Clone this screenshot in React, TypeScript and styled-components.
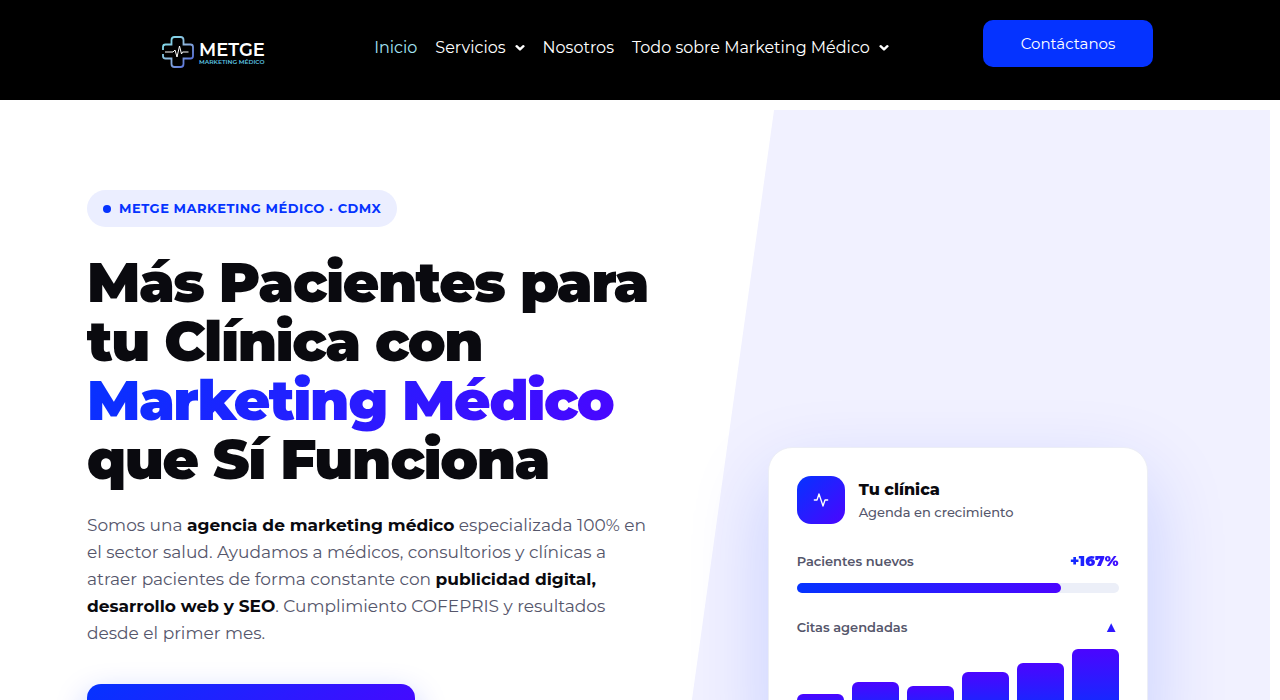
import React from "react";
import styled, { createGlobalStyle } from "styled-components";

const gradient = "linear-gradient(135deg, #0533ff, #4b05ff)";

const GlobalStyle = createGlobalStyle`
  * { box-sizing: border-box; }
  body {
    margin: 0;
    background: #fff;
    color: #0a0a0f;
    font-family: Montserrat, "Open Sans", sans-serif;
  }
  h1, p { margin: 0; }
  a { color: inherit; text-decoration: none; }
`;

const Header = styled.header`
  display: flex;
  justify-content: space-between;
  align-items: flex-start;
  height: 100px;
  padding: 20px 127px 0 160px;
  background: #000;
`;

const Logo = styled.a`
  display: flex;
  align-items: center;
  gap: 4px;
  width: 120px;
  height: 64px;
  color: #fff;
`;

const LogoText = styled.span`
  display: flex;
  flex-direction: column;
  padding-top: 4px;
  font-size: 18px;
  line-height: 16px;
  font-weight: 600;
`;

const LogoSub = styled.small`
  color: #5cc4e4;
  font-size: 6px;
  line-height: 8px;
  font-weight: 600;
`;

const Nav = styled.nav`
  display: flex;
  gap: 18px;
  padding-top: 16px;
`;

const NavLink = styled.a<{ $active?: boolean }>`
  display: flex;
  align-items: center;
  gap: 9px;
  color: ${(p) => (p.$active ? "#a3e4f5" : "#fff")};
  font-size: 16px;
  line-height: 24px;
  white-space: nowrap;
`;

const Contact = styled.a`
  width: 170px;
  border-radius: 10px;
  background: #0533ff;
  color: #fff;
  font-size: 15px;
  line-height: 47px;
  text-align: center;
`;

const Hero = styled.section`
  position: relative;
  margin: 10px;
  padding: 80px 77px 144px;
`;

const Wedge = styled.div`
  position: absolute;
  inset: 0 0 0 52%;
  background: #f1f1ff;
  clip-path: polygon(18% 0, 100% 0, 100% 100%, 0 100%);
`;

const HeroGrid = styled.div`
  position: relative;
  display: grid;
  grid-template-columns: 11fr 9fr;
  gap: 60px;
  max-width: 1180px;
  margin: 0 auto;
`;

const Copy = styled.div`
  display: flex;
  flex-direction: column;
  align-items: flex-start;
`;

const Badge = styled.span`
  display: flex;
  align-items: center;
  gap: 8px;
  padding: 0 16px;
  border-radius: 20px;
  background: #ebeeff;
  color: #0533ff;
  font-size: 13px;
  line-height: 37px;
  font-weight: 700;
  letter-spacing: 0.04em;
  white-space: nowrap;
  &::before {
    content: "";
    width: 8px;
    height: 8px;
    border-radius: 50%;
    background: #0533ff;
  }
`;

const Title = styled.h1`
  margin-top: 26px;
  font-size: 56px;
  line-height: 59px;
  font-weight: 900;
  letter-spacing: -0.026em;
  white-space: nowrap;
`;

const GradientText = styled.span`
  background: ${gradient};
  background-clip: text;
  -webkit-background-clip: text;
  color: transparent;
`;

const Highlight = styled(GradientText)`
  padding-right: 4px;
`;

const Lead = styled.p`
  max-width: 560px;
  margin-top: 23px;
  color: #55566b;
  font-size: 17px;
  line-height: 27px;
  strong { color: #0a0a0f; font-weight: 700; }
`;

const Cta = styled.a`
  width: 328px;
  height: 60px;
  margin-top: 37px;
  border-radius: 14px;
  background: ${gradient};
  box-shadow: 0 12px 32px rgba(5, 51, 255, 0.28);
`;

const Card = styled.aside`
  align-self: start;
  justify-self: center;
  width: 100%;
  max-width: 380px;
  margin-top: 257px;
  padding: 28px;
  border: 1px solid #eceef6;
  border-radius: 24px;
  background: #fff;
  box-shadow: 0 30px 80px rgba(5, 51, 255, 0.18);
`;

const CardHead = styled.div`
  display: flex;
  align-items: center;
  gap: 14px;
  padding-bottom: 3px;
`;

const IconTile = styled.span`
  display: grid;
  place-items: center;
  width: 48px;
  height: 48px;
  border-radius: 14px;
  background: ${gradient};
`;

const CardTitle = styled.strong`
  display: block;
  font-size: 16px;
  line-height: 24px;
  font-weight: 800;
`;

const Label = styled.span<{ $strong?: boolean }>`
  display: block;
  color: #55566b;
  font-size: 13px;
  line-height: 20px;
  font-weight: ${(p) => (p.$strong ? 600 : 500)};
`;

const Metric = styled.div`
  display: flex;
  justify-content: space-between;
  align-items: center;
  margin-top: 23px;
`;

const Value = styled(GradientText)`
  font-size: 15px;
  line-height: 22px;
  font-weight: 900;
`;

const Trend = styled(Value)`
  font-family: "Liberation Sans", sans-serif;
`;

const Track = styled.div`
  height: 10px;
  margin-top: 11px;
  border-radius: 5px;
  background: #eceff8;
`;

const Fill = styled.div`
  width: 82%;
  height: 100%;
  border-radius: 5px;
  background: linear-gradient(90deg, #0533ff, #4b05ff);
`;

const Chart = styled.div`
  display: flex;
  align-items: flex-end;
  gap: 8px;
  height: 70px;
  margin-top: 11px;
`;

const Bar = styled.div`
  flex: 1;
  border-radius: 6px 6px 0 0;
  background: linear-gradient(180deg, #4b05ff, #0533ff);
`;

const bars = [36, 53, 47, 67, 80, 100];

const Chevron = () => (
  <svg width="10" height="8" viewBox="0 0 10 8" fill="none" stroke="currentColor" strokeWidth="2.4" strokeLinecap="round" strokeLinejoin="round">
    <path d="M1.6 2.2 5 5.4 8.4 2.2" />
  </svg>
);

export default function App() {
  return (
    <>
      <GlobalStyle />
      <Header>
        <Logo href="#" aria-label="Metge Marketing Médico">
          <svg width="35" height="32" viewBox="0 0 35 32" fill="none">
            <defs>
              <linearGradient id="cross" x1="0" y1="0" x2="1" y2="1">
                <stop offset="0" stopColor="#7ce6ee" />
                <stop offset="0.5" stopColor="#8fb4dc" />
                <stop offset="1" stopColor="#4358d8" />
              </linearGradient>
            </defs>
            <path d="M3 14v-3q0-2.500 2.500-2.500h6V4q0-3 3-3h6q3 0 3 3v4.500h7q2.500 0 2.500 2.500v9q0 2.500-2.500 2.500h-7V28q0 3-3 3h-6q-3 0-3-3v-5.500h-6Q3 22.500 3 20v-2" stroke="url(#cross)" strokeWidth="1.8" />
            <path d="M5 16h8l2-2 2 7 2.500-11 2 8 1-2h6" stroke="#fff" strokeWidth="1" />
          </svg>
          <LogoText>METGE<LogoSub>MARKETING MÉDICO</LogoSub></LogoText>
        </Logo>
        <Nav>
          <NavLink href="#" $active>Inicio</NavLink>
          <NavLink href="#">Servicios <Chevron /></NavLink>
          <NavLink href="#">Nosotros</NavLink>
          <NavLink href="#">Todo sobre Marketing Médico <Chevron /></NavLink>
        </Nav>
        <Contact href="#">Contáctanos</Contact>
      </Header>
      <Hero>
        <Wedge />
        <HeroGrid>
          <Copy>
            <Badge>METGE MARKETING MÉDICO · CDMX</Badge>
            <Title>
              Más Pacientes para<br />tu Clínica con<br />
              <Highlight>Marketing Médico</Highlight><br />que Sí Funciona
            </Title>
            <Lead>
              Somos una <strong>agencia de marketing médico</strong> especializada 100% en
              el sector salud. Ayudamos a médicos, consultorios y clínicas a
              atraer pacientes de forma constante con <strong>publicidad digital,
              desarrollo web y SEO</strong>. Cumplimiento COFEPRIS y resultados
              desde el primer mes.
            </Lead>
            <Cta href="#" aria-label="Contáctanos" />
          </Copy>
          <Card>
            <CardHead>
              <IconTile>
                <svg width="16" height="16" viewBox="0 0 24 24" fill="none" stroke="#fff" strokeWidth="2" strokeLinecap="round" strokeLinejoin="round">
                  <polyline points="22 12 18 12 15 21 9 3 6 12 2 12" />
                </svg>
              </IconTile>
              <div>
                <CardTitle>Tu clínica</CardTitle>
                <Label>Agenda en crecimiento</Label>
              </div>
            </CardHead>
            <Metric><Label $strong>Pacientes nuevos</Label><Value>+167%</Value></Metric>
            <Track><Fill /></Track>
            <Metric><Label $strong>Citas agendadas</Label><Trend>▲</Trend></Metric>
            <Chart>{bars.map((h) => <Bar key={h} style={{ height: `${h}%` }} />)}</Chart>
          </Card>
        </HeroGrid>
      </Hero>
    </>
  );
}
